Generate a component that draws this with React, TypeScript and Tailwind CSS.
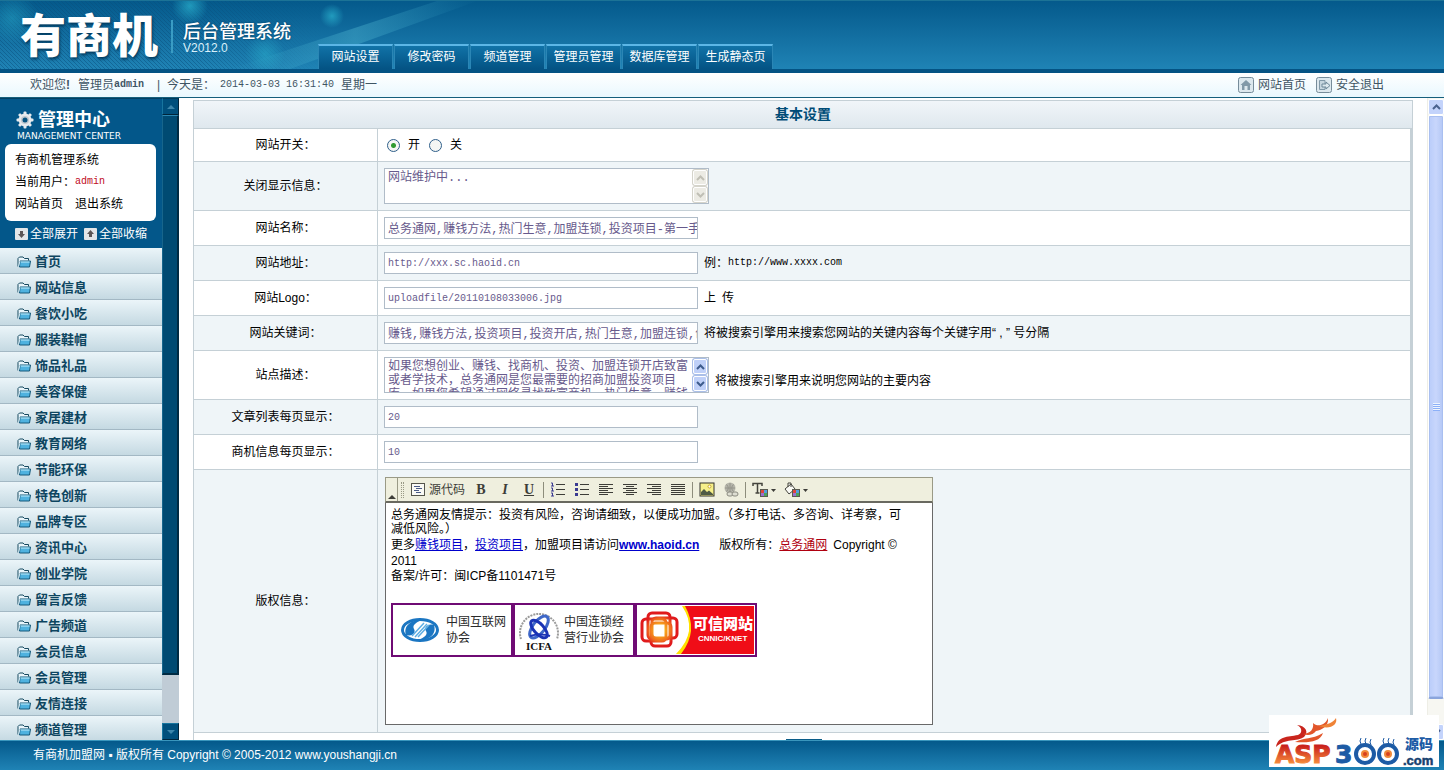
import { useState, type ReactNode } from "react"


const navTabs = ["网站设置", "修改密码", "频道管理", "管理员管理", "数据库管理", "生成静态页"];

const menuItems = [
    "首页", "网站信息", "餐饮小吃", "服装鞋帽", "饰品礼品", "美容保健", "家居建材", "教育网络", "节能环保", "特色创新",
    "品牌专区", "资讯中心", "创业学院", "留言反馈", "广告频道", "会员信息", "会员管理", "友情连接", "频道管理",
];

const inputClass = "h-[22px] w-[314px] border border-[#b0bcc8] bg-white pl-[3px] text-[#675a8c] outline-0 ";
const monoClass = "[font-family:'Liberation_Mono','Noto_Sans_CJK_SC',monospace] ";

const Chevron = ({ up }: { up?: boolean }) => (
    <svg viewBox="0 0 9 6" className="h-[6px] w-[9px]" fill="none" stroke="currentColor" strokeWidth="2">
        <path d={up ? "M1 5 4.500 1.500 8 5" : "M1 1 4.500 4.500 8 1"} />
    </svg>
)

const Triangle = ({ up }: { up?: boolean }) => (
    <svg viewBox="0 0 8 4" className="h-1 w-2" fill="#3d86ab">
        <path d={up ? "M0 4 4 0 8 4Z" : "M0 0 4 4 8 0Z"} />
    </svg>
)

const FolderIcon = () => (
    <svg viewBox="0 0 14 12" className="h-3 w-[14px]">
        <path d="M1 10.500V2.500L2.500 1H6L7.500 2.500H11.500V4.500" fill="#e8f5fb" stroke="#15485f" />
        <path d="M3 5H13.500L12.500 11H2.500Z" fill="#4fb2df" stroke="#15587a" />
        <path d="M4 6H12.500" stroke="#c3ecfb" />
        <path d="M1.500 10.500 3 5" stroke="#d4effa" />
    </svg>
)

const ArrowBox = ({ up }: { up?: boolean }) => (
    <svg viewBox="0 0 13 12" className="h-3 w-[13px]">
        <rect width="13" height="12" rx="1" fill="#e3e6e8" />
        <path d={up ? "M6.500 2 10 6H8V9H5V6H3Z" : "M6.500 10 3 6H5V3H8V6H10Z"} fill="#5c5656" />
    </svg>
)

const GearIcon = () => (
    <svg viewBox="0 0 18 18" className="h-[18px] w-[18px]">
        <g fill="#e7ebee">
            <circle cx="9" cy="9" r="6.500" />
            <rect x="7.500" y="0.500" width="3" height="17" rx="1" />
            <rect x="7.500" y="0.500" width="3" height="17" rx="1" transform="rotate(45 9 9)" />
            <rect x="7.500" y="0.500" width="3" height="17" rx="1" transform="rotate(90 9 9)" />
            <rect x="7.500" y="0.500" width="3" height="17" rx="1" transform="rotate(135 9 9)" />
        </g>
        <circle cx="9" cy="9" r="4" fill="#c3cad0" />
        <circle cx="9" cy="9" r="2.500" fill="#085480" />
    </svg>
)

const Header = () => (
    <header className="relative flex h-[73px] shrink-0 overflow-hidden border-b-4 border-[#045384] bg-linear-to-b from-[#04598b] to-[#1f83b5]">
        <svg className="absolute inset-0 h-full w-[520px]" viewBox="0 0 520 69" preserveAspectRatio="none">
            <defs>
                <pattern id="stripe" width="4" height="4" patternUnits="userSpaceOnUse">
                    <path d="M-1 -1 5 5M-1 3 1 5M3 -1 5 1" stroke="#0a4f7d" strokeWidth="1" opacity="0.500" />
                </pattern>
                <linearGradient id="fade" x1="0" x2="1">
                    <stop offset="0.600" stopColor="#fff" />
                    <stop offset="1" stopColor="#000" />
                </linearGradient>
                <linearGradient id="beam" x1="0" x2="1">
                    <stop offset="0" stopColor="#45b5d2" stopOpacity="0" />
                    <stop offset="0.500" stopColor="#5bc3da" stopOpacity="0.350" />
                    <stop offset="1" stopColor="#45b5d2" stopOpacity="0" />
                </linearGradient>
                <radialGradient id="glow">
                    <stop offset="0" stopColor="#2bb3cf" stopOpacity="0.700" />
                    <stop offset="1" stopColor="#2bb3cf" stopOpacity="0" />
                </radialGradient>
                <mask id="stripeMask"><rect width="320" height="69" fill="url(#fade)" /></mask>
            </defs>
            <rect width="320" height="69" fill="url(#stripe)" mask="url(#stripeMask)" />
            <path d="M230 69 440 0H480L290 69Z" fill="url(#beam)" />
            <circle cx="190" cy="6" r="18" fill="url(#glow)" />
            <circle cx="332" cy="16" r="12" fill="url(#glow)" />
            <circle cx="265" cy="54" r="20" fill="url(#glow)" opacity="0.700" />
            <circle cx="12" cy="18" r="26" fill="url(#glow)" opacity="0.600" />
        </svg>
        <div className="absolute inset-x-0 top-0 h-px bg-[#1c7396]" />
        <div className="relative flex w-[318px] shrink-0 items-start pl-5">
            <h1 className="mt-[13px] w-[151px] text-[46px] leading-[46px] font-black whitespace-nowrap text-white [text-shadow:1px_2px_3px_#02395c]">有商机</h1>
            <div className="mt-5 h-[33px] w-[2px] bg-[#3a9cc4]" />
            <div className="mt-[22px] ml-[10px] text-white">
                <p className="text-[18px] leading-[20px] font-medium whitespace-nowrap [text-shadow:0_0_2px_#02395c]">后台管理系统</p>
                <p className="text-[12px] leading-[12px] text-[#d9f0fa]">V2012.0</p>
            </div>
        </div>
        <nav className="relative flex items-end gap-px self-end">
            {navTabs.map((tab) => (
                <a key={tab} href="#" className="h-[25px] w-[75px] border-t-2 border-r border-l border-t-[#5cb6e6] border-r-[#2b86b5] border-l-[#2b86b5] bg-linear-to-b from-[#1173a8] to-[#045384] text-center text-[12px] leading-[22px] whitespace-nowrap text-white">{tab}</a>
            ))}
        </nav>
    </header>
)

const SubBar = () => (
    <div className="flex h-[25px] shrink-0 items-center justify-between border-b border-[#155f7c] bg-linear-to-b from-white to-[#e9f8fe] pr-[60px] pl-[30px] text-[12px] whitespace-nowrap text-[#3f5564]">
        <p className="flex items-center leading-[24px]">
            <span className="w-12">欢迎您<b>!</b></span>
            <span>管理员</span>
            <b className={monoClass + "w-[43px] text-[10px]"}>admin</b>
            <span className="w-[10px]">|</span>
            <span className="w-[53px]">今天是&#xFF1A;</span>
            <span className={monoClass + "w-[121px] text-[10px]"}>2014-03-03 16:31:40</span>
            <span>星期一</span>
        </p>
        <div className="flex gap-[10px] leading-[24px]">
            <a href="#" className="flex items-center gap-1">
                <svg viewBox="0 0 16 16" className="h-4 w-4">
                    <rect x="0.500" y="0.500" width="15" height="15" rx="2" fill="#dce8ee" stroke="#768c9a" />
                    <path d="M8 3 13.500 8H12V13H9.500V9H6.500V13H4V8H2.500Z" fill="#8199a8" />
                </svg>
                网站首页
            </a>
            <a href="#" className="flex items-center gap-1">
                <svg viewBox="0 0 16 16" className="h-4 w-4">
                    <rect x="0.500" y="0.500" width="15" height="15" rx="2" fill="#dce8ee" stroke="#768c9a" />
                    <path d="M3.500 3.500H9V12.500H3.500Z" fill="#c6d6df" stroke="#8199a8" />
                    <path d="M6 7H10V5L14 8.500 10 12V10H6Z" fill="#dce8ee" stroke="#6f8999" />
                </svg>
                安全退出
            </a>
        </div>
    </div>
)

const Sidebar = () => (
    <aside className="flex w-[179px] shrink-0 overflow-hidden">
        <div className="flex w-[162px] flex-col overflow-hidden">
            <div className="h-[150px] shrink-0 border-t border-[#003f63] bg-[#03578a] px-[5px] pt-[10px] text-white">
                <div className="flex items-center gap-1 pl-[11px]">
                    <GearIcon />
                    <h2 className="text-[18px] leading-[22px] font-bold">管理中心</h2>
                </div>
                <p className="pl-3 text-[9px] leading-[11px] whitespace-nowrap [font-family:'DejaVu_Sans',sans-serif]">MANAGEMENT CENTER</p>
                <div className="mt-[2px] h-[77px] w-[151px] rounded-md bg-white py-[5px] pl-[10px] text-[12px] leading-[22px] text-black">
                    <p>有商机管理系统</p>
                    <p className="flex">当前用户&#xFF1A;<span className={monoClass + "text-[10px] text-[#c00a1c]"}>admin</span></p>
                    <p className="flex gap-3"><a href="#">网站首页</a><a href="#">退出系统</a></p>
                </div>
                <div className="flex gap-[6px] pt-[2px] pl-[10px] text-[12px] leading-[22px] whitespace-nowrap">
                    <button type="button" className="flex items-center gap-[2px]"><ArrowBox />全部展开</button>
                    <button type="button" className="flex items-center gap-[2px]"><ArrowBox up />全部收缩</button>
                </div>
            </div>
            <nav>
                {menuItems.map((item) => (
                    <a key={item} href="#" className="flex h-[26px] items-center gap-1 border-b border-[#a3b8c4] bg-linear-to-b from-[#ebf5f9] to-[#c5d9e2] pt-[2px] pl-[17px] text-[13px] leading-[23px] font-bold text-[#0d4560]">
                        <FolderIcon />{item}
                    </a>
                ))}
            </nav>
        </div>
        <div className="flex w-[17px] flex-col bg-[#c0ccd6]">
            <button type="button" aria-label="向上" className="flex h-[17px] shrink-0 items-center justify-center border border-t-[#003a5a] border-r-[#00243a] border-b-[#00243a] border-l-[#17759f] bg-[#004f7c]"><Triangle up /></button>
            <div className="grow-[560] basis-0 border border-t-[#2b87b3] border-r-2 border-r-[#002a42] border-b-2 border-b-[#002a42] border-l-[#17658c] bg-[#004a72]" />
            <div className="grow-[48] basis-0" />
            <button type="button" aria-label="向下" className="flex h-[17px] shrink-0 items-center justify-center border border-t-[#17759f] border-r-[#00243a] border-b-[#00243a] border-l-[#17759f] bg-[#004f7c]"><Triangle /></button>
        </div>
    </aside>
)

type RowProps = {
    label: string
    id: string
    height: string
    shaded?: boolean
    children: ReactNode
}

const Row = ({ label, id, height, shaded, children }: RowProps) => (
    <tr className={shaded ? "bg-[#eff5f8]" : "bg-white"}>
        <th scope="row" className={height + " w-[184px] border-r border-b border-[#c5d0d6] p-0 text-center font-normal"}>
            <label htmlFor={id}>{label}&#xFF1A;</label>
        </th>
        <td className="border-r-[3px] border-b border-[#c5d0d6] py-0 pr-0 pl-[6px]">
            <div className="flex items-center gap-[6px] whitespace-nowrap">{children}</div>
        </td>
    </tr>
)

type ScrollAreaProps = {
    id: string
    text: string
    active?: boolean
}

const ScrollArea = ({ id, text, active }: ScrollAreaProps) => {
    const button = active
        ? "flex flex-1 items-center justify-center rounded-xs border border-white bg-[#bfd0f8] text-[#3d5b8c] shadow-[0_0_0_1px_#aabfe8]"
        : "flex flex-1 items-center justify-center rounded-xs border border-white bg-[#ecebe4] text-[#c0bfb5] shadow-[0_0_0_1px_#d5d4cb]";
    return (
        <div className="flex h-9 w-[325px] border border-[#b0bcc8] bg-white">
            <textarea id={id} defaultValue={text} className={monoClass + "block h-full min-w-0 flex-1 resize-none overflow-hidden pt-[2px] pl-[3px] text-[12px] leading-[14px] text-[#675a8c] outline-0"} />
            <div className="flex w-4 flex-col gap-[2px] p-px">
                <button type="button" aria-label="向上" className={button}><Chevron up /></button>
                <button type="button" aria-label="向下" className={button}><Chevron /></button>
            </div>
        </div>
    )
}

const Lines = ({ rows }: { rows: [number, number][] }) => (
    <svg viewBox="0 0 16 16" className="h-4 w-4">
        {rows.map(([x, w], i) => <rect key={i} x={x} y={2 + i * 2} width={w} height="1" fill="#3d3d38" />)}
    </svg>
)

const ToolButton = ({ title, children }: { title: string, children: ReactNode }) => (
    <button type="button" title={title} className="flex h-6 w-6 items-center justify-center text-[14px] leading-[16px] text-[#3d3d38] [font-family:'Liberation_Serif',serif]">{children}</button>
)

const ListIcon = ({ ordered }: { ordered?: boolean }) => (
    <svg viewBox="0 0 16 16" className="h-4 w-4">
        {[2, 7, 12].map((y) => (
            <g key={y}>
                <rect x="6" y={y} width="9" height="1" fill="#3d3d38" />
                {ordered
                    ? <path d={`M1 ${y - 1}H2.500V${y + 2}M1 ${y + 2}H4`} stroke="#3b3b91" fill="none" />
                    : <rect x="1" y={y - 1} width="3" height="3" fill="#3b3b91" />}
            </g>
        ))}
    </svg>
)

const ColorSwatch = () => (
    <g>
        <rect x="7" y="6" width="8" height="8" fill="#5a5a50" />
        <rect x="8" y="7" width="3" height="3" fill="#e0463c" />
        <rect x="11" y="7" width="3" height="3" fill="#4f9fdf" />
        <rect x="8" y="10" width="3" height="3" fill="#9a6fd0" />
        <rect x="11" y="10" width="3" height="3" fill="#4aa55a" />
    </g>
)

const Divider = () => <span className="mx-[2px] h-4 w-px bg-[#8d8d7c]" />

const Toolbar = () => (
    <div className="flex h-[26px] items-center border border-b-2 border-[#9a9a86] border-b-[#696960] bg-[#efefde]">
        <button type="button" title="收起" className="flex h-full w-3 items-end justify-center border-r border-[#9a9a86] pb-[2px]">
            <svg viewBox="0 0 8 4" className="h-1 w-2"><path d="M0 4 4 0 8 4Z" fill="#3d3d38" /></svg>
        </button>
        <span className="mx-[3px] h-4 w-[3px] border-r border-l border-dotted border-[#9a9a86]" />
        <button type="button" className="ml-1 flex w-[58px] items-center gap-[3px] text-[12px] whitespace-nowrap text-[#3d3d38]">
            <svg viewBox="0 0 15 14" className="h-[14px] w-[15px]">
                <rect x="0.500" y="0.500" width="13" height="12" fill="#fafaf5" stroke="#55554c" />
                <path d="M3 3.500H9M5 5.500H11M3 7.500H8M5 9.500H10" stroke="#4a5a86" />
            </svg>
            源代码
        </button>
        <ToolButton title="加粗"><b>B</b></ToolButton>
        <ToolButton title="倾斜"><b><i>I</i></b></ToolButton>
        <ToolButton title="下划线"><b className="underline">U</b></ToolButton>
        <Divider />
        <ToolButton title="编号列表"><ListIcon ordered /></ToolButton>
        <ToolButton title="项目列表"><ListIcon /></ToolButton>
        <ToolButton title="左对齐"><Lines rows={[[1, 14], [1, 9], [1, 14], [1, 9], [1, 14], [1, 9]]} /></ToolButton>
        <ToolButton title="居中"><Lines rows={[[1, 14], [4, 8], [1, 14], [4, 8], [1, 14], [4, 8]]} /></ToolButton>
        <ToolButton title="右对齐"><Lines rows={[[1, 14], [6, 9], [1, 14], [6, 9], [1, 14], [6, 9]]} /></ToolButton>
        <ToolButton title="两端对齐"><Lines rows={[[1, 14], [1, 14], [1, 14], [1, 14], [1, 14], [1, 14]]} /></ToolButton>
        <Divider />
        <ToolButton title="图片">
            <svg viewBox="0 0 16 16" className="h-4 w-4">
                <rect x="1" y="1" width="14" height="13" fill="#f6f08a" stroke="#33332c" />
                <circle cx="10.500" cy="4.500" r="1.500" fill="#fff" stroke="#c7a52c" />
                <path d="M2 13V10L5 7 8 10 10 8.500 14 12V13Z" fill="#4f5a44" />
            </svg>
        </ToolButton>
        <ToolButton title="超链接">
            <svg viewBox="0 0 16 16" className="h-4 w-4">
                <circle cx="7" cy="6" r="5.500" fill="#b5b5aa" />
                <path d="M2 6H12M7 1V11M3.500 2.500Q7 6 3.500 9.500M10.500 2.500Q7 6 10.500 9.500" stroke="#94948a" fill="none" />
                <rect x="4" y="10" width="6" height="4" rx="2" fill="#deded2" stroke="#8b8b80" />
                <rect x="9" y="10" width="6" height="4" rx="2" fill="#deded2" stroke="#8b8b80" />
            </svg>
        </ToolButton>
        <Divider />
        <button type="button" title="文本颜色" className="ml-1 flex items-center">
            <svg viewBox="0 0 26 16" className="h-4 w-[26px]">
                <path d="M1 4V1.500H10V4M5.500 1.500V11M3.500 11H7.500" stroke="#44443d" strokeWidth="1.500" fill="none" />
                <g transform="translate(1 1)"><ColorSwatch /></g>
                <path d="M19 7H24L21.500 10Z" fill="#3d3d38" />
            </svg>
        </button>
        <button type="button" title="背景颜色" className="ml-[6px] flex items-center">
            <svg viewBox="0 0 26 16" className="h-4 w-[26px]">
                <path d="M1 7 7 2 11 7 5 12ZM4 5V1H7V5" stroke="#44443d" fill="#fafaf5" />
                <g transform="translate(1 1)"><ColorSwatch /></g>
                <path d="M19 7H24L21.500 10Z" fill="#3d3d38" />
            </svg>
        </button>
    </div>
)

const Badges = () => (
    <div className="flex whitespace-normal">
        <a href="#" className="flex h-[54px] w-[122px] items-center border-2 border-[#6f0b74] bg-white pl-2 text-[12px] leading-[16px] text-[#2a2a2a]">
            <svg viewBox="0 0 38 24" className="mr-[7px] h-6 w-[38px] shrink-0">
                <ellipse cx="19" cy="12" rx="17.500" ry="10.500" fill="#fff" stroke="#1b76c2" strokeWidth="3" />
                <path d="M5 17C2 8 10 1 22 2C14 4 11 8 13 11C15 14 12 19 5 17Z" fill="#1b76c2" />
                <path d="M33 7C36 16 28 23 16 22C24 20 27 16 25 13C23 10 26 5 33 7Z" fill="#1b76c2" />
                <path d="M11 18 23 5M14 19 26 6M17 19 28 7" stroke="#5faee3" strokeWidth="1.500" />
            </svg>
            <span className="w-[60px]">中国互联网协会</span>
        </a>
        <a href="#" className="flex h-[54px] w-[122px] items-center border-2 border-[#6f0b74] bg-white pl-[3px] text-[12px] leading-[16px] text-[#2a2a2a]">
            <svg viewBox="0 0 42 46" className="mr-1 h-[46px] w-[42px] shrink-0">
                <path d="M3 32A19 19 0 1 1 39 32" fill="none" stroke="#9a9a9a" strokeWidth="2" strokeDasharray="2 1" />
                <ellipse cx="21" cy="20" rx="6" ry="13" transform="rotate(38 21 20)" fill="none" stroke="#3f68c8" strokeWidth="3" />
                <ellipse cx="21" cy="22" rx="5" ry="11" transform="rotate(-42 21 22)" fill="none" stroke="#1a33b5" strokeWidth="3" />
                <path d="M12 29C18 27 27 27 32 29" fill="none" stroke="#1a33b5" strokeWidth="2" />
                <text x="21" y="43" textAnchor="middle" fontSize="11" fontWeight="700" fontFamily="Liberation Serif, serif" fill="#111">ICFA</text>
            </svg>
            <span className="w-[60px]">中国连锁经营行业协会</span>
        </a>
        <a href="#" className="block h-[54px] w-[122px] border-2 border-[#6f0b74]">
            <svg viewBox="0 0 118 50" className="h-[50px] w-[118px]">
                <defs>
                    <radialGradient id="knot" cx="23" cy="25" r="19" gradientUnits="userSpaceOnUse">
                        <stop offset="0.200" stopColor="#f9b61e" />
                        <stop offset="0.600" stopColor="#ef6a1d" />
                        <stop offset="0.850" stopColor="#e01a1c" />
                    </radialGradient>
                </defs>
                <rect width="118" height="50" fill="#fff" />
                <path d="M45 1Q62 26 39 49H50Q62 30 52 1Z" fill="#ffe000" />
                <path d="M48 1H117V49H44Q62 26 48 1Z" fill="#f00d17" />
                <g fill="none" stroke="url(#knot)" strokeWidth="3">
                    <rect x="11" y="8" width="22" height="26" rx="4" />
                    <rect x="15" y="13" width="25" height="20" rx="4" />
                    <rect x="14" y="18" width="20" height="23" rx="4" />
                    <rect x="5" y="14" width="24" height="22" rx="4" />
                </g>
                <text x="56" y="24" fontSize="15" fontWeight="900" fontFamily="Noto Sans CJK SC, sans-serif" fill="#fff">可信网站</text>
                <text x="61" y="36" fontSize="8" fontWeight="700" fontFamily="Liberation Sans, sans-serif" fill="#fff">CNNIC/KNET</text>
            </svg>
        </a>
    </div>
)

const Editor = () => (
    <div className="my-[7px] ml-px w-[548px]">
        <Toolbar />
        <div id="copyright" className="h-[222px] border border-t-0 border-[#696969] bg-white px-[5px] pt-[5px] text-[12px] leading-[14px]">
            <p>总务通网友情提示&#xFF1A;投资有风险&#xFF0C;咨询请细致&#xFF0C;以便成功加盟。&#xFF08;多打电话、多咨询、详考察&#xFF0C;可<br />减低风险。&#xFF09;</p>
            <p className="mt-px leading-[16px]">
                更多<a href="#" className="text-[#0000cc] underline">赚钱项目</a>&#xFF0C;<a href="#" className="text-[#0000cc] underline">投资项目</a>&#xFF0C;加盟项目请访问<a href="#" className="font-bold text-[#0000cc] underline">www.haoid.cn</a>
                <span className="ml-5">版权所有&#xFF1A;</span><a href="#" className="mr-[6px] text-[#b00010] underline">总务通网</a>Copyright ©<br />2011
            </p>
            <p className="mb-[19px] leading-[15px]">备案/许可&#xFF1A;闽ICP备1101471号</p>
            <Badges />
        </div>
    </div>
)

const SettingsForm = () => {
    const [open, setOpen] = useState(true);

    const radioClass = "h-[13px] w-[13px] appearance-none rounded-full border border-[#2f5f8a] bg-[#f4f6f4] checked:bg-[radial-gradient(circle,#2f9a2f_0_2px,#f4f6f4_3px)]";

    return (
        <form className="min-w-0 flex-1 overflow-hidden bg-white px-[14px] pt-[2px]">
            <table className="w-full table-fixed border-separate border-spacing-0 border-t border-l border-[#c5d0d6] text-[12px] leading-[18px] text-black">
                <colgroup><col className="w-[184px]" /><col /></colgroup>
                <thead>
                    <tr>
                        <th colSpan={2} className="h-[28px] border-r border-b border-[#c5d0d6] bg-linear-to-b from-[#f1f5f9] to-[#dfe8ee] p-0 pb-[2px] text-center text-[14px] font-bold text-[#004c77]">基本设置</th>
                    </tr>
                </thead>
                <tbody>
                    <Row label="网站开关" id="open" height="h-[33px]">
                        <label className="flex items-center gap-2 pl-[3px]"><input id="open" type="radio" name="status" checked={open} onChange={() => setOpen(true)} className={radioClass} />开</label>
                        <label className="flex items-center gap-2 pl-[3px]"><input type="radio" name="status" checked={!open} onChange={() => setOpen(false)} className={radioClass} />关</label>
                    </Row>
                    <Row label="关闭显示信息" id="message" height="h-[49px]" shaded>
                        <ScrollArea id="message" text="网站维护中..." />
                    </Row>
                    <Row label="网站名称" id="name" height="h-[35px]">
                        <input id="name" type="text" defaultValue="总务通网,赚钱方法,热门生意,加盟连锁,投资项目-第一手资讯" className={inputClass + monoClass + "text-[12px]"} />
                    </Row>
                    <Row label="网站地址" id="url" height="h-[35px]" shaded>
                        <input id="url" type="text" defaultValue="http://xxx.sc.haoid.cn" className={inputClass + monoClass + "text-[10px]"} />
                        <span className="flex">例&#xFF1A;<span className={monoClass + "text-[10px]"}>http://www.xxxx.com</span></span>
                    </Row>
                    <Row label="网站Logo" id="logo" height="h-[35px]">
                        <input id="logo" type="text" defaultValue="uploadfile/20110108033006.jpg" className={inputClass + monoClass + "text-[10px]"} />
                        <button type="button" className="flex gap-[6px]"><span>上</span><span>传</span></button>
                    </Row>
                    <Row label="网站关键词" id="keywords" height="h-[35px]" shaded>
                        <input id="keywords" type="text" defaultValue="赚钱,赚钱方法,投资项目,投资开店,热门生意,加盟连锁,创业" className={inputClass + monoClass + "text-[12px]"} />
                        <span>将被搜索引擎用来搜索您网站的关键内容每个关键字用“ , ” 号分隔</span>
                    </Row>
                    <Row label="站点描述" id="description" height="h-[49px]">
                        <ScrollArea id="description" active text={"如果您想创业、赚钱、找商机、投资、加盟连锁开店致富\n或者学技术\uFF0C总务通网是您最需要的招商加盟投资项目\n库。如果您希望通过网络寻找致富商机、热门生意、赚钱"} />
                        <span className="pt-3">将被搜索引擎用来说明您网站的主要内容</span>
                    </Row>
                    <Row label="文章列表每页显示" id="articles" height="h-[35px]" shaded>
                        <input id="articles" type="text" defaultValue="20" className={inputClass + monoClass + "text-[10px]"} />
                    </Row>
                    <Row label="商机信息每页显示" id="deals" height="h-[35px]">
                        <input id="deals" type="text" defaultValue="10" className={inputClass + monoClass + "text-[10px]"} />
                    </Row>
                    <Row label="版权信息" id="copyright" height="h-[263px]" shaded>
                        <Editor />
                    </Row>
                    <tr>
                        <td colSpan={2} className="h-9 p-0 pt-[6px] text-center align-top">
                            <button type="submit" aria-label="提交" className="h-5 w-9 border border-[#0a5c88] bg-[#2b86b5]" />
                        </td>
                    </tr>
                </tbody>
            </table>
        </form>
    )
}

const PageScrollbar = () => (
    <div className="flex w-[17px] shrink-0 flex-col border-l border-[#eeeee6] bg-[#f7f7f2] pt-px">
        <button type="button" aria-label="向上" className="flex h-4 shrink-0 items-center justify-center rounded-xs border border-white bg-[#c3d3fb] text-[#4a628f]"><Chevron up /></button>
        <div className="flex grow-[584] basis-0 items-center justify-center rounded-xs border border-b-2 border-white border-b-[#8ba5dc] bg-linear-to-r from-[#b9ccfa] via-[#c8d6fc] to-[#b3c7f5] shadow-[inset_0_0_0_1px_#a9bff0]">
            <span className="h-2 w-[7px] bg-[repeating-linear-gradient(#eef4fe_0_1px,#8cb0f8_1px_2px)]" />
        </div>
        <div className="grow-[25] basis-0" />
        <button type="button" aria-label="向下" className="flex h-4 shrink-0 items-center justify-center rounded-xs border border-white bg-[#c3d3fb] text-[#4a628f]"><Chevron /></button>
    </div>
)

const Watermark = () => (
    <svg viewBox="0 0 170 52" className="absolute right-[5px] bottom-[3px] h-[52px] w-[170px] overflow-visible">
        <defs>
            <linearGradient id="fire" x1="0" y1="0" x2="0" y2="1">
                <stop offset="0.200" stopColor="#c9201c" />
                <stop offset="0.800" stopColor="#f58a3c" />
            </linearGradient>
        </defs>
        <rect width="170" height="52" fill="#fff" />
        <path d="M7 32C9 21 18 22 29 20C34 18 33 12 28 10C37 11 40 17 35 22C28 27 16 23 7 32Z" fill="#c9251d" />
        <path d="M34 19C42 18 45 14 44 8C48 12 56 11 59 3C60 11 53 15 47 16C44 20 39 21 34 19Z" fill="#e2562a" />
        <path d="M50 11C57 10 64 8 67 3C69 10 61 15 50 11Z" fill="#ef8337" />
        <path d="M26 27C36 22 42 25 54 18C51 27 40 28 26 27Z" fill="#e2562a" />
        <text x="6" y="48" fontSize="25" fontWeight="700" fontFamily="DejaVu Sans, sans-serif" fill="url(#fire)" stroke="url(#fire)">ASP</text>
        <text x="66" y="48" fontSize="25" fontWeight="700" fontFamily="DejaVu Sans, sans-serif" fill="#1d5ba5" stroke="#1d5ba5">3</text>
        {[96, 119].map((x) => (
            <g key={x}>
                <circle cx={x} cy="39" r="9" fill="#fff" stroke="#1d5ba5" strokeWidth="4" />
                <circle cx={x} cy="39" r="4" fill="#f08a3a" />
                <circle cx={x} cy="39" r="2" fill="#d8401f" />
                <path d={`M${x - 4} 29Q${x - 6} 26 ${x - 4} 23M${x + 1} 29Q${x - 1} 26 ${x + 1} 23M${x + 6} 30Q${x + 4} 27 ${x + 6} 24`} fill="none" stroke="#1d5ba5" />
            </g>
        ))}
        <text x="136" y="34" fontSize="14" fontWeight="900" fontFamily="Noto Sans CJK SC, sans-serif" fill="#1d5ba5">源码</text>
        <text x="134" y="50" fontSize="13" fontWeight="700" fontFamily="Liberation Sans, sans-serif" fill="#15406f" stroke="#15406f" strokeWidth="0.500">.com</text>
    </svg>
)

const App = () => {
    return (
        <div className="relative flex h-screen flex-col overflow-hidden bg-white [font-family:'Liberation_Sans','Noto_Sans_CJK_SC',sans-serif]">
            <Header />
            <SubBar />
            <main className="flex min-h-0 flex-1">
                <Sidebar />
                <SettingsForm />
                <PageScrollbar />
            </main>
            <footer className="h-[30px] shrink-0 border-t border-[#3a96bd] bg-linear-to-b from-[#04598b] to-[#1f83b5] pl-[33px] text-[12px] leading-[28px] text-white">
                有商机加盟网 ▪ 版权所有 Copyright © 2005-2012 www.youshangji.cn
            </footer>
            <Watermark />
        </div>
    )
}

export default App
